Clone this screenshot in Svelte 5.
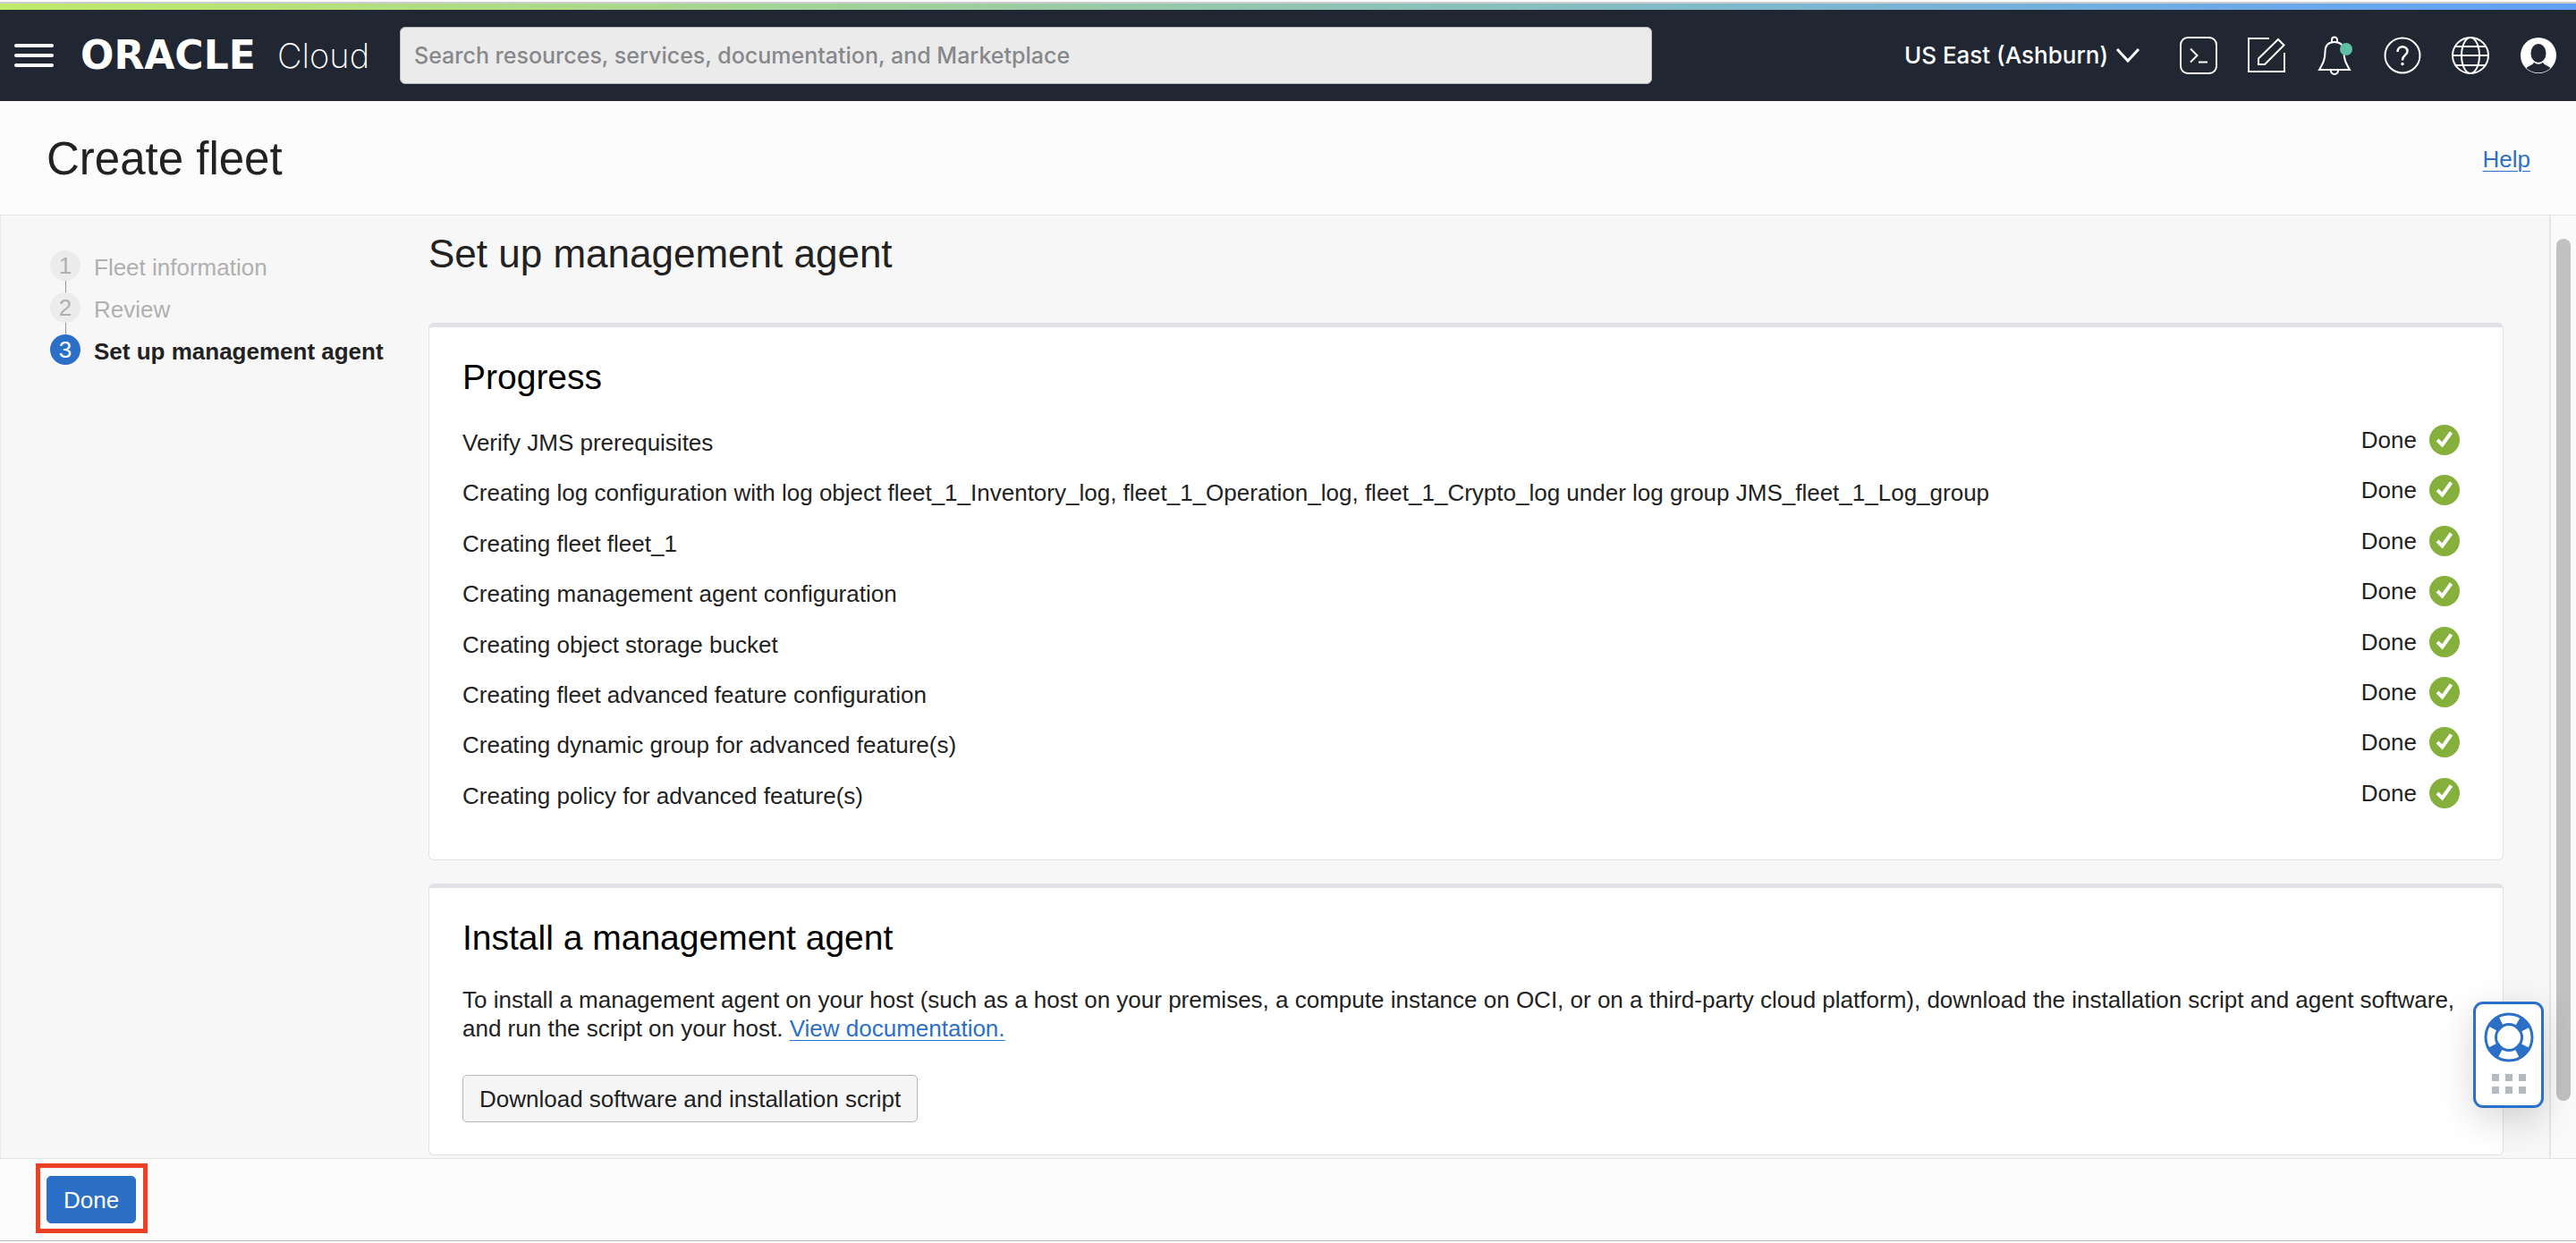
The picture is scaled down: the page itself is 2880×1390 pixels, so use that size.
<script>
  const steps = [
    { label: 'Fleet information', current: false },
    { label: 'Review', current: false },
    { label: 'Set up management agent', current: true }
  ];
  const tasks = [
    'Verify JMS prerequisites',
    'Creating log configuration with log object fleet_1_Inventory_log, fleet_1_Operation_log, fleet_1_Crypto_log under log group JMS_fleet_1_Log_group',
    'Creating fleet fleet_1',
    'Creating management agent configuration',
    'Creating object storage bucket',
    'Creating fleet advanced feature configuration',
    'Creating dynamic group for advanced feature(s)',
    'Creating policy for advanced feature(s)'
  ];
</script>

<div class="app">
  <div class="rainbow"></div>
  <header class="topbar">
    <button class="icon-btn menu" aria-label="Navigation menu">
      <svg width="44" height="26" viewBox="0 0 44 26" stroke="#fff" stroke-width="4" stroke-linecap="round">
        <path d="M2 2H42M2 13H42M2 24H42" />
      </svg>
    </button>
    <a class="brand" href="#home"><span class="oracle">ORACLE</span><span class="cloud">Cloud</span></a>
    <input class="search" type="search" aria-label="Search" placeholder="Search resources, services, documentation, and Marketplace" />
    <div class="tools">
      <button class="region">
        US East (Ashburn)
        <svg width="28" height="18" viewBox="0 0 28 18" fill="none" stroke="#fff" stroke-width="3"><path d="M2 2L14 15L26 2" /></svg>
      </button>
      <button class="icon-btn" aria-label="Cloud Shell">
        <svg width="44" height="44" viewBox="0 0 44 44" fill="none" stroke="#fff" stroke-width="2">
          <rect x="2" y="2" width="40" height="40" rx="8" />
          <path d="M13 14.500L20.500 22L13 29.500M22 29.500H32" />
        </svg>
      </button>
      <button class="icon-btn" aria-label="Feedback">
        <svg width="44" height="44" viewBox="0 0 44 44" fill="none" stroke="#fff" stroke-width="2">
          <path d="M25 3H2V40H42V19" />
          <path d="M35 4L41.500 10.500L20 32H13V25.500Z" />
        </svg>
      </button>
      <button class="icon-btn" aria-label="Notifications">
        <svg width="44" height="44" viewBox="0 0 44 44" fill="none" stroke="#fff" stroke-width="2">
          <path d="M19 7.500V4.500a3 3 0 0 1 6 0V7.500" />
          <path d="M22 7C15 7 11.500 11 11.500 18C11.500 27 9 31 5 38H39C35 31 32.500 27 32.500 18C32.500 11 29 7 22 7Z" />
          <path d="M18 39a4 4 0 0 0 8 0" />
          <circle cx="35" cy="15" r="7" fill="#61bfa5" stroke="none" />
        </svg>
      </button>
      <button class="icon-btn" aria-label="Help menu">
        <svg width="44" height="44" viewBox="0 0 44 44" fill="none" stroke="#fff" stroke-width="2">
          <circle cx="22" cy="22" r="19.500" />
          <path d="M16.500 18C16.500 10.500 27.500 10.500 27.500 17.500C27.500 21.500 22 21.500 22 27.500" stroke-width="2.500" />
          <circle cx="22" cy="31.500" r="1.700" fill="#fff" stroke="none" />
        </svg>
      </button>
      <button class="icon-btn" aria-label="Language">
        <svg width="44" height="44" viewBox="0 0 44 44" fill="none" stroke="#fff" stroke-width="2">
          <circle cx="22" cy="22" r="20" />
          <ellipse cx="22" cy="22" rx="10" ry="20" />
          <path d="M2 22H42M5 12H39M5 33H39" />
        </svg>
      </button>
      <button class="icon-btn" aria-label="Profile">
        <svg width="44" height="44" viewBox="0 0 44 44">
          <circle cx="22" cy="22" r="20" fill="#fff" />
          <ellipse cx="22" cy="19.500" rx="8.500" ry="10.500" fill="#202733" />
          <path d="M17 29.500C16 33 10 34 8.500 36C15 43 29 43 35.500 36C34 34 28 33 27 29.500C24.500 32.500 19.500 32.500 17 29.500Z" fill="#202733" />
        </svg>
      </button>
    </div>
  </header>

  <div class="titlebar">
    <h1>Create fleet</h1>
    <a class="link" href="#help">Help</a>
  </div>

  <div class="body">
    <nav class="steps" aria-label="Steps">
      <ol>
        {#each steps as step, i}
          <li class:current={step.current} aria-current={step.current ? 'step' : undefined}>
            <span class="num">{i + 1}</span>
            <span>{step.label}</span>
          </li>
        {/each}
      </ol>
    </nav>
    <main>
      <h2>Set up management agent</h2>
      <section class="card progress">
        <h3>Progress</h3>
        <ul>
          {#each tasks as task}
            <li>
              <span class="task">{task}</span>
              <span class="status">
                Done
                <svg width="34" height="34" viewBox="0 0 34 34">
                  <circle cx="17" cy="17" r="17" fill="#84b03b" />
                  <path d="M9 17L14.500 22.500L24.500 8.500" fill="none" stroke="#fff" stroke-width="4" />
                </svg>
              </span>
            </li>
          {/each}
        </ul>
      </section>
      <section class="card install">
        <h3>Install a management agent</h3>
        <p>
          To install a management agent on your host (such as a host on your premises, a compute instance on OCI, or on a third-party cloud platform), download the installation script and agent software, and run the script on your host. <a class="link" href="#docs">View documentation.</a>
        </p>
        <button class="btn">Download software and installation script</button>
      </section>
    </main>
    <div class="scroll"><div class="thumb"></div></div>
  </div>

  <footer>
    <div class="highlight"><button class="btn primary">Done</button></div>
  </footer>

  <button class="support" aria-label="Support">
    <svg width="56" height="56" viewBox="0 0 56 56" fill="none" stroke="#2b70c6">
      <circle cx="28" cy="28" r="20" stroke-width="14" stroke-dasharray="12 19.416" stroke-dashoffset="-9.708" />
      <circle cx="28" cy="28" r="26" stroke-width="3" />
      <circle cx="28" cy="28" r="14.500" stroke-width="3" />
    </svg>
    <svg width="38" height="23" viewBox="0 0 38 23" fill="#b4bac1">
      {#each [0, 15, 30] as x}
        <rect {x} y="0" width="8" height="8" />
        <rect {x} y="14" width="8" height="8" />
      {/each}
    </svg>
  </button>
</div>

<style>
  :global(body) { margin: 0; background: #fcfcfc; }
  :global(*) { box-sizing: border-box; }
  .app {
    min-height: 100vh;
    display: flex;
    flex-direction: column;
    font-family: 'Liberation Sans', Arial, sans-serif;
    font-size: 26px;
    line-height: 32px;
    color: #222;
  }
  h1, h2, h3, p, ol, ul { margin: 0; padding: 0; font-weight: 400; }
  li { list-style: none; }
  button, input { font: inherit; color: inherit; }
  svg { display: block; flex: none; }
  .rainbow {
    height: 11px;
    border-top: 2px solid #fcfcfc;
    background: linear-gradient(90deg, #c0ea68, #60a0fa);
    box-shadow: inset 0 2px #cbcccf;
  }
  .topbar {
    height: 102px;
    display: flex;
    align-items: center;
    padding: 0 20px 0 16px;
    background: #202733;
    color: #fff;
  }
  .icon-btn { border: 0; padding: 0; background: none; }
  .brand { display: flex; align-items: center; width: 357px; margin-left: 30px; color: #fff; text-decoration: none; }
  .oracle { min-width: 220px; font: 700 44px/48px 'DejaVu Sans', sans-serif; }
  .cloud { font: 200 38px/48px Inter, sans-serif; }
  .search {
    width: 1400px;
    min-width: 0;
    flex: 0 1 auto;
    height: 64px;
    padding: 0 15px;
    border: 1px solid #b4b8be;
    border-radius: 6px;
    background: #ebebeb;
    font: 500 25px/32px Inter, sans-serif;
  }
  .search::placeholder { color: #87888b; opacity: 1; }
  .tools { margin-left: auto; display: flex; align-items: center; gap: 32px; }
  .region { display: flex; align-items: center; gap: 8px; border: 0; padding: 0; margin-right: 11px; background: none; font: 500 26px/32px Inter, sans-serif; white-space: nowrap; }
  .titlebar {
    height: 127px;
    display: flex;
    align-items: center;
    justify-content: space-between;
    padding: 2px 51px 0 52px;
    background: #fcfcfc;
  }
  h1 { font-size: 51px; line-height: 60px; }
  .link { color: #2b70c6; text-decoration: underline; text-decoration-thickness: 1px; text-underline-offset: 4px; }
  .body {
    flex: 1;
    display: grid;
    grid-template-columns: 478px minmax(0, 1fr) 30px;
    border-top: 1px solid #e5e6e8;
    border-left: 1px solid #e8e8e8;
    background: #f7f7f7;
  }
  .steps { padding: 39px 0 0 55px; }
  .steps li { position: relative; display: flex; gap: 15px; height: 47px; color: #b0b0b0; }
  .steps li > span:last-child { padding-top: 3px; white-space: nowrap; }
  .steps li:not(:last-child)::after { content: ''; position: absolute; left: 17px; top: 34px; height: 13px; width: 1px; background: #999; }
  .num { width: 34px; height: 34px; border-radius: 50%; background: #ececec; text-align: center; line-height: 35px; }
  .steps .current { color: #222; font-weight: 700; }
  .current .num { background: #2b70c6; color: #fff; font-weight: 400; }
  main { padding: 18px 51px 2px 0; }
  h2 { font-size: 44px; line-height: 50px; margin-bottom: 52px; }
  .card { border: 1px solid #e1e2e6; border-top-width: 5px; border-radius: 6px; background: #fff; padding: 33px 48px 36px 37px; }
  h3 { font-size: 39px; line-height: 46px; color: #000; }
  .progress { margin-bottom: 26px; padding-bottom: 45px; }
  .progress ul { display: grid; grid-auto-rows: 1fr; min-height: 471px; padding-top: 20px; }
  .progress li { display: flex; justify-content: space-between; align-items: flex-start; padding-top: 10px; }
  .task { padding-top: 4px; }
  .status { display: flex; align-items: center; gap: 14px; }
  .install p { padding: 30px 0 36px; }
  .btn { display: block; height: 53px; padding: 0 18px; border: 1px solid #b4b8be; border-radius: 5px; background: #f5f5f5; }
  .scroll { border-left: 2px solid #e6e6e6; background: #fafafa; padding: 26px 4px 64px 6px; }
  .thumb { height: 100%; width: 16px; border-radius: 8px; background: #c1c1c1; }
  footer { height: 93px; border-top: 1px solid #e3e3e3; border-bottom: 1px solid #b5b8bd; margin-bottom: 2px; padding: 5px 0 0 40px; background: #fcfcfc; }
  .highlight { width: max-content; border: 5px solid #ec4124; padding: 9px 8px 6px 7px; }
  .primary { background: #2b70c6; border-color: #2b70c6; color: #fff; }
  .support {
    position: fixed;
    right: 36px;
    bottom: 151px;
    width: 79px;
    height: 119px;
    padding: 9px 0 0;
    display: flex;
    flex-direction: column;
    align-items: center;
    gap: 13px;
    border: 3px solid #2b70c6;
    border-radius: 11px;
    background: #fff;
    box-shadow: 0 12px 40px rgba(0, 0, 0, 0.16);
  }
</style>
